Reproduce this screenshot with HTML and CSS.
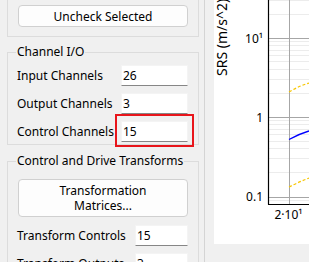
FILE: index.html
```html
<!DOCTYPE html>
<html lang="en">

<head>
    <meta charset="UTF-8">
    <title>Drive Setup</title>
    <link rel="stylesheet" href="styles.css">
</head>

<body>

    <div class="window">

        <div class="sidebar">
            <div class="group group-top">
                <button class="btn">Uncheck Selected</button>
            </div>

            <fieldset class="group">
                <legend>Channel I/O</legend>
                <div class="form io-form">
                    <label>Input Channels</label>
                    <input type="text" value="26" />
                    <label>Output Channels</label>
                    <input type="text" value="3" />
                    <label>Control Channels</label>
                    <span class="highlight"><input type="text" value="15" /></span>
                </div>
            </fieldset>

            <fieldset class="group">
                <legend>Control and Drive Transforms</legend>
                <button class="btn btn-tall">Transformation<br>Matrices...</button>
                <div class="form transform-form">
                    <label>Transform Controls</label>
                    <input type="text" value="15" />
                    <label>Transform Outputs</label>
                    <input type="text" value="3" />
                </div>
            </fieldset>
        </div>

        <!-- SRS plot -->
        <div class="plot">
            <svg width="95" height="244" viewBox="0 0 95 244">
                <g class="minor">
                    <line x1="55" x2="95" y1="0.5" y2="0.5" />
                    <line x1="55" x2="95" y1="14.5" y2="14.5" />
                    <line x1="55" x2="95" y1="41.5" y2="41.5" />
                    <line x1="55" x2="95" y1="45.5" y2="45.5" />
                    <line x1="55" x2="95" y1="50.5" y2="50.5" />
                    <line x1="55" x2="95" y1="55.5" y2="55.5" />
                    <line x1="55" x2="95" y1="61.5" y2="61.5" />
                    <line x1="55" x2="95" y1="69.5" y2="69.5" />
                    <line x1="55" x2="95" y1="79.5" y2="79.5" />
                    <line x1="55" x2="95" y1="93.5" y2="93.5" />
                    <line x1="55" x2="95" y1="120.5" y2="120.5" />
                    <line x1="55" x2="95" y1="124.5" y2="124.5" />
                    <line x1="55" x2="95" y1="129.5" y2="129.5" />
                    <line x1="55" x2="95" y1="134.5" y2="134.5" />
                    <line x1="55" x2="95" y1="141.5" y2="141.5" />
                    <line x1="55" x2="95" y1="148.5" y2="148.5" />
                    <line x1="55" x2="95" y1="158.5" y2="158.5" />
                    <line x1="55" x2="95" y1="172.5" y2="172.5" />
                    <line x1="55" x2="95" y1="200.5" y2="200.5" />
                </g>
                <g class="major">
                    <line x1="55" x2="95" y1="38.5" y2="38.5" />
                    <line x1="55" x2="95" y1="117.5" y2="117.5" />
                    <line x1="55" x2="95" y1="197.5" y2="197.5" />
                    <line x1="75.5" x2="75.5" y1="0" y2="204" />
                </g>

                <path class="curve-limit" d="M75 92 Q85 86 95 83" />
                <path class="curve-ref" d="M75 139.5 Q85 134 95 131" />
                <path class="curve-limit" d="M75 187 Q85 182 95 178" />

                <g class="axis">
                    <line x1="54.5" x2="54.5" y1="0" y2="204.5" />
                    <line x1="54" x2="95" y1="204.5" y2="204.5" />
                </g>

                <g class="ticks">
                    <text x="49" y="42.5">10¹</text>
                    <text x="49" y="121.5">1</text>
                    <text x="49" y="201">0.1</text>
                    <text class="tick-x" x="74.5" y="219">2·10¹</text>
                </g>
                <text class="axis-title" transform="translate(13,76) rotate(-90)">SRS (m/s^2)</text>
            </svg>
        </div>

    </div>

</body>

</html>
```

FILE: styles.css
```css
html,
body {
    margin: 0;
    height: 100%;
    overflow: hidden;
}

body {
    font-family: "Noto Sans", Arial, sans-serif;
    font-size: 12px;
    background: #f0f0f0;
    color: #000;
}

.window {
    display: flex;
    align-items: flex-start;
    height: 262px;
}

.sidebar {
    width: 205px;
    height: 262px;
    box-sizing: border-box;
    border-right: 1px solid #d4d4d4;
    flex-shrink: 0;
}

.group {
    width: 192px;
    box-sizing: border-box;
    margin: 0 0 0 7px;
    border: 1px solid #dcdcdc;
    min-width: 0;
}

.group-top {
    margin-top: -10px;
    margin-bottom: 7px;
    padding: 14px 10px 9px 10px;
}

fieldset.group {
    padding: 0 10px 2px 9px;
}

fieldset.group + fieldset.group {
    margin-top: 8px;
}

legend {
    padding: 0 1px;
    margin-left: -1px;
    line-height: 16px;
    font-size: 12px;
}

.btn {
    display: block;
    width: 100%;
    height: 22px;
    padding: 0;
    font-family: inherit;
    font-size: 12px;
    color: #000;
    background: #fdfdfd;
    border: 1px solid #d0d0d0;
    border-radius: 4px;
}

fieldset .btn {
    width: calc(100% - 1px);
    margin: 10px 0 0 1px;
}

.btn-tall {
    height: 38px;
    line-height: 15px;
}

.form {
    display: grid;
    grid-auto-rows: 21px;
    row-gap: 7px;
    margin-top: 5px;
}

.io-form {
    grid-template-columns: 104px 1fr;
}

.transform-form {
    grid-template-columns: 118px 1fr;
    margin-top: 8px;
}

.form label {
    align-self: center;
    white-space: nowrap;
    line-height: 16px;
}

.form input {
    display: block;
    width: 100%;
    height: 21px;
    box-sizing: border-box;
    margin: 0;
    padding: 0 0 0 1px;
    font-family: inherit;
    font-size: 12px;
    color: #000;
    background: #fff;
    border: 1px solid #f4f4f4;
    border-bottom-color: #868686;
    outline: none;
}

.highlight {
    position: relative;
    display: block;
}

.highlight::after {
    content: '';
    position: absolute;
    left: -6px;
    right: -6px;
    top: -7px;
    bottom: -5px;
    border: 2px solid #e8151b;
    pointer-events: none;
}

.plot {
    margin-left: 9px;
    width: 95px;
    height: 244px;
    background: #fff;
    flex-shrink: 0;
}

.plot svg {
    display: block;
}

.minor line {
    stroke: #ececec;
    stroke-width: 1;
}

.major line {
    stroke: #a6a6a6;
    stroke-width: 1;
}

.axis line {
    stroke: #000;
    stroke-width: 1.2;
}

.curve-limit {
    fill: none;
    stroke: #f7c600;
    stroke-width: 1.2;
    stroke-dasharray: 3 2;
}

.curve-ref {
    fill: none;
    stroke: #0000ff;
    stroke-width: 1.4;
}

.ticks text {
    font-family: "Noto Sans", Arial, sans-serif;
    font-size: 12px;
    fill: #000;
    text-anchor: end;
}

.ticks .tick-x {
    text-anchor: middle;
}

.axis-title {
    font-family: "Noto Sans", Arial, sans-serif;
    font-size: 14px;
    fill: #000;
}
```
